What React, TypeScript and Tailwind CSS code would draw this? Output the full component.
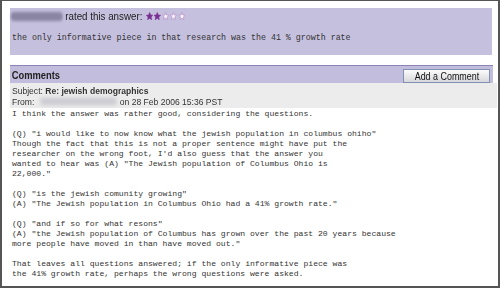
import React from "react";

const sans = { fontFamily: '"Liberation Sans", Arial, sans-serif' };

function Stars({ filled }: { filled: number }) {
  return (
    <span className="inline-flex items-center gap-[1px] ml-[4px]">
      {[0, 1, 2, 3, 4].map((i) => (
        <svg key={i} width="8.5" height="8.5" viewBox="0 0 24 24">
          <path
            d="M12 1.5l3.1 7.1 7.7.6-5.9 5 1.8 7.5L12 17.8 5.3 21.7l1.8-7.5-5.9-5 7.7-.6z"
            fill={i < filled ? "#7a2f92" : "#f7f1f9"}
            stroke={i < filled ? "#7a2f92" : "#b58bc6"}
            strokeWidth="2"
          />
        </svg>
      ))}
    </span>
  );
}

const body = `I think the answer was rather good, considering the questions.

(Q) "i would like to now know what the jewish population in columbus ohiho"
Though the fact that this is not a proper sentence might have put the
researcher on the wrong foot, I'd also guess that the answer you
wanted to hear was (A) "The Jewish population of Columbus Ohio is
22,000."

(Q) "is the jewish comunity growing"
(A) "The Jewish population in Columbus Ohio had a 41% growth rate."

(Q) "and if so for what resons"
(A) "the Jewish population of Columbus has grown over the past 20 years because
more people have moved in than have moved out."

That leaves all questions answered; if the only informative piece was
the 41% growth rate, perhaps the wrong questions were asked.`;

export default function App() {
  return (
    <div className="w-[500px] h-[288px] bg-white border-2 border-t border-[#555555] overflow-hidden box-border">
      <div className="ml-2 mr-[6px] mt-[7px] h-[47px] bg-[#c5c0de]">
        <div
          className="flex items-center pt-[2px] leading-[12px] text-[11.5px] text-[#222] origin-left scale-x-[0.85] whitespace-nowrap"
          style={sans}
        >
          <span className="inline-block w-[61px] h-[9px] mr-[3px] ml-[1px] bg-[#8a85a2] blur-[1.5px] rounded-sm" />
          <span>rated this answer:</span>
          <Stars filled={2} />
        </div>
        <div className="mt-[11px] pl-[2px] font-['Liberation_Mono',monospace] text-[8.3px] leading-[10px] text-[#333] whitespace-pre">
          the only informative piece in that research was the 41 % growth rate
        </div>
      </div>

      <div className="ml-2 mr-[5px] mt-[10px] h-[18px] bg-[#c3bddd] border-t border-[#8b84b6] flex items-start justify-between">
        <span
          className="pl-[2px] pt-[3px] font-bold text-[11px] leading-[12px] text-[#222] origin-left scale-x-[0.85]"
          style={sans}
        >
          Comments
        </span>
        <button className="mt-[3px] mr-[3px] h-[14px] w-[87px] border border-[#8191b3] bg-gradient-to-b from-[#fbfbfb] to-[#d8d8dc] flex items-center justify-center">
          <span className="text-[10.5px] leading-[12px] text-[#111] scale-x-[0.85] whitespace-nowrap" style={sans}>
            Add a Comment
          </span>
        </button>
      </div>

      <div className="ml-2 mr-[1px] h-[25px] bg-[#ececec] pt-[3px] pl-[2px] text-[9px] leading-[10.5px] text-[#333]" style={sans}>
        <div className="origin-left scale-x-[0.95] whitespace-nowrap">
          Subject: <span className="font-bold">Re: jewish demographics</span>
        </div>
        <div className="flex items-center origin-left scale-x-[0.95] whitespace-nowrap">
          <span>From:</span>
          <span className="inline-block ml-[6px] mr-[4px] w-[80px] h-[7px] bg-[#c9c9d0] blur-[2px]" />
          <span>on 28 Feb 2006 15:36 PST</span>
        </div>
      </div>

      <div className="ml-2 pl-[2px] pt-[1px] font-['Liberation_Mono',monospace] text-[8.1px] leading-[10px] text-[#333] whitespace-pre">
        {body}
      </div>
    </div>
  );
}
